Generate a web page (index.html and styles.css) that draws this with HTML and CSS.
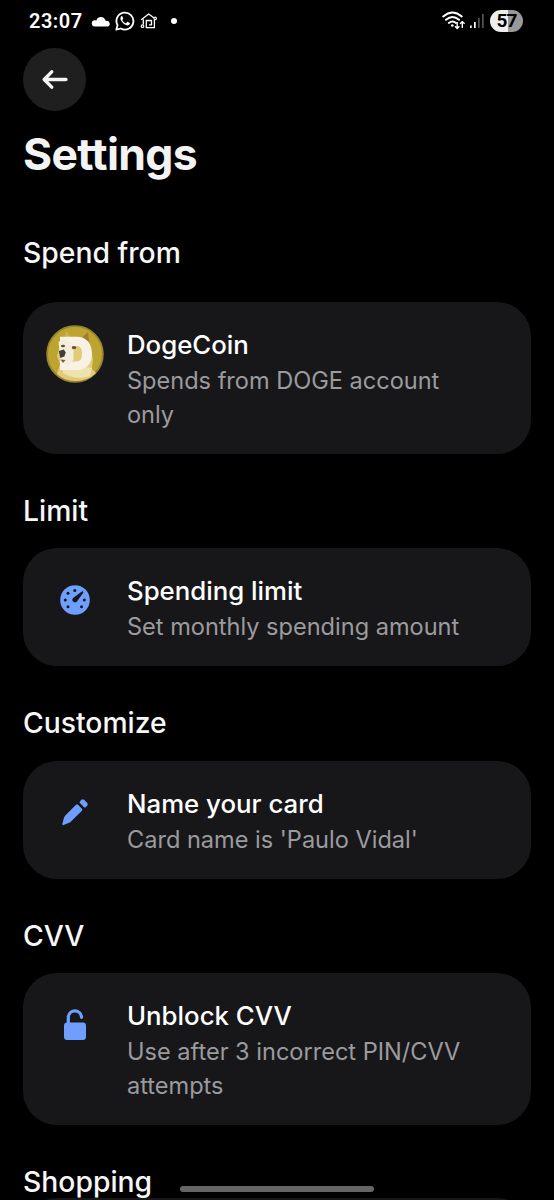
FILE: index.html
```html
<!DOCTYPE html>
<html lang="en">
<head>
<meta charset="utf-8">
<title>Settings</title>
<link rel="stylesheet" href="styles.css">
</head>
<body>
<div class="screen">
  <header class="status">
    <div class="status-left">
      <span class="clock">23:07</span>
      <svg class="cloud" width="20" height="12" viewBox="0 0 20 12"><path fill="#fff" d="M3.500 11.500a3.200 3.200 0 0 1-.2-6.300q1.200-.2 1.900.2A5 5 0 0 1 14 4.200q.7 1 .7 1.800A2.800 2.800 0 0 1 16.800 11.500z"/></svg>
      <svg class="whatsapp" width="20" height="20" viewBox="0 0 20 20"><path fill="none" stroke="#fff" stroke-width="1.800" stroke-linejoin="round" d="M1.300 18.700l1.200-4.500A8.500 8.500 0 1 1 5.800 17.500z"/><path fill="#fff" d="M7.300 5.200c-.4-.3-.8-.2-1.200.2-1.300 1.400-.7 3.400.6 5.200 1.500 2.100 3.700 3.800 5.800 3.900 1.100 0 2.300-.8 2.400-1.900.1-.4-.1-.6-.4-.8l-1.700-.9c-.3-.1-.5-.1-.7.2l-.8 1c-.2.200-.4.300-.7.100-1.400-.6-2.400-1.600-3.200-2.900-.1-.3-.1-.4.1-.6.400-.4.900-.9.700-1.400z"/></svg>
      <svg class="home" width="18" height="16" viewBox="0 0 18 16"><g fill="none" stroke="#fff" stroke-width="1.300" stroke-linejoin="round"><path d="M3.300 11.500V6.300M1.200 6.700L8.700 1l5.400 4M14.400 6.800v7.900H6.300V7.500h5.200v4.400H9"/></g><g fill="#000" stroke="#fff" stroke-width="1.200"><circle cx="2.500" cy="13.200" r="1.300"/><circle cx="15.200" cy="5.400" r="1.200"/></g></svg>
      <span class="dot"></span>
    </div>
    <div class="status-right">
      <svg class="wifi" width="24" height="20" viewBox="0 0 24 20"><g fill="none" stroke="#fff" stroke-width="1.900" stroke-linecap="round"><path d="M1.200 5.500Q10.500-2.500 19.800 5.500M4 8.800q6.500-5.600 13 0M6.800 12q3.700-3 7.200 0"/></g><circle cx="10.300" cy="14.500" r="1.300" fill="#fff"/><path fill="none" stroke="#fff" stroke-width="1.400" d="M15.200 11v6.500M13 15.300l2.200 2.300 2.200-2.300M20.300 17v-6.300M18 12.800l2.300-2.200 2.300 2.200"/></svg>
      <svg class="signal" width="14" height="16" viewBox="0 0 14 16"><path fill="#fff" d="M0 12.500h1.700V15H0zM4 9h1.700v6H4z"/><path fill="#555" d="M8 5h1.700v10H8zM12 1h1.700v14H12z"/></svg>
      <span class="battery">57</span>
    </div>
  </header>
  <main class="content">
    <button class="back" aria-label="Back"><svg width="26" height="20" viewBox="0 0 26 20"><path fill="none" stroke="#f4f4f4" stroke-width="3.300" stroke-linecap="round" stroke-linejoin="round" d="M24 9.500H2.500M9.700 1.800L2.200 9.500l7.500 7.700"/></svg></button>
    <h1 class="title">Settings</h1>

    <section class="group first">
      <h2 class="heading">Spend from</h2>
      <div class="card">
        <div class="icon"><svg width="58" height="58" viewBox="0 0 58 58"><circle cx="29" cy="29" r="27.900" fill="#bda32f" stroke="#96852f" stroke-width="1.800"/><path fill="#a17b32" d="M35 14l7-7 1.500 12z"/><path fill="#cdb45c" d="M19 13l1-7 6 8z"/><path fill="#e2ca78" d="M15 16q14-8 28 1l4 17-1 10 4 4q-8 8-20 8-12 0-19-7l3-10-3-8z"/><path fill="#eee2ad" d="M16 37l14 3 16 3-2 8q-14 5-27-3z"/><path fill="#f7f2e5" fill-rule="evenodd" d="M14 11.800h17c9.500 0 15 7 15 16.700S41 45 31 45H14V36h4V21h-4zM26 21v15.500h4.500c4 0 5.500-3 5.500-8s-1.500-7.500-5.500-7.500z"/><path fill="#f4eddb" d="M12.500 17q6-5 12 0l3 9v9l-6 6-7-6z"/><path fill="#403f35" d="M12.800 26l5-1.500 2 3-1.500 4-4 1.500z"/><path fill="#69644e" d="M14.500 34.500l5 .5-2.500 3z"/><ellipse cx="17" cy="21" rx="2" ry="1.300" fill="#5a4d2c"/><ellipse cx="28" cy="22.500" rx="2.300" ry="1.500" fill="#65532c"/></svg></div>
        <div class="text"><div class="name">DogeCoin</div><div class="desc">Spends from DOGE account only</div></div>
      </div>
    </section>

    <section class="group">
      <h2 class="heading">Limit</h2>
      <div class="card">
        <div class="icon"><svg width="58" height="58" viewBox="0 0 58 58"><circle cx="29" cy="29" r="14.800" fill="#6e9fff"/><g fill="#17171a"><circle cx="28.800" cy="19.500" r="1.500"/><circle cx="22" cy="22.200" r="1.500"/><circle cx="19.300" cy="29" r="1.500"/><circle cx="22" cy="35.700" r="1.500"/><circle cx="35.500" cy="35.700" r="1.500"/><circle cx="38.300" cy="29" r="1.500"/><path d="M35.900 20.500a.9.900 0 0 1 1.300 1.300L31 30.500a2.600 2.600 0 1 1-3.900-3.500z"/></g></svg></div>
        <div class="text"><div class="name">Spending limit</div><div class="desc">Set monthly spending amount</div></div>
      </div>
    </section>

    <section class="group">
      <h2 class="heading">Customize</h2>
      <div class="card">
        <div class="icon"><svg width="58" height="58" viewBox="0 0 58 58"><path fill="#6e9fff" d="M16.300 40l1.600-6q.4-1.500 1.400-2.500L30 20.800q1-.9 2 0l3.900 3.900q.9 1 0 2L25 37.400q-1 1-2.500 1.600l-4.900 2.100q-1.400.3-1.300-1.100zM33.900 17.400l1.600-1.600q1.300-1.100 2.600 0l3.200 3.200q1.100 1.300 0 2.600l-1.600 1.600q-.8.800-1.600 0l-4.200-4.200q-.8-.8 0-1.600z"/></svg></div>
        <div class="text"><div class="name">Name your card</div><div class="desc">Card name is 'Paulo Vidal'</div></div>
      </div>
    </section>

    <section class="group">
      <h2 class="heading">CVV</h2>
      <div class="card">
        <div class="icon"><svg width="58" height="58" viewBox="0 0 58 58"><rect x="18" y="26.500" width="22" height="17.500" rx="3.200" fill="#6e9fff"/><path fill="none" stroke="#6e9fff" stroke-width="3.200" stroke-linecap="round" d="M22.300 28v-7.500a6.700 6.700 0 0 1 13.200 0v.8"/></svg></div>
        <div class="text"><div class="name">Unblock CVV</div><div class="desc">Use after 3 incorrect PIN/CVV attempts</div></div>
      </div>
    </section>

    <section class="group last"><h2 class="heading">Shopping</h2><div class="card"></div></section>
  </main>
  <div class="gesture"></div>
</div>
</body>
</html>
```

FILE: styles.css
```css
* { box-sizing: border-box; }
body { margin: 0; background: #000; }
.screen { position: relative; width: 554px; height: 1200px; overflow: hidden; background: #000; color: #f7f7f7; font-family: Inter, "Liberation Sans", sans-serif; }
.status { height: 42px; padding: 0 31px 0 29px; display: flex; justify-content: space-between; align-items: center; }
.status-left, .status-right { display: flex; align-items: center; }
.clock { width: 62px; font: 600 20px/24px Roboto, sans-serif; letter-spacing: .5px; color: #fff; }
.whatsapp { margin-left: 4px; }
.home { margin-left: 5px; }
.dot { width: 6px; height: 6px; margin-left: 13px; border-radius: 50%; background: #fff; }
.signal { margin: 0 6px 0 4px; }
.battery { width: 33px; height: 22px; border-radius: 11px; background: linear-gradient(90deg, #eee 56%, #999 56%); color: #000; font: 700 19px/22px Roboto, sans-serif; letter-spacing: -.8px; text-align: center; }
.content { padding: 6px 23px 0; }
.back { display: flex; align-items: center; justify-content: center; width: 63px; height: 63px; padding: 0; border: 0; border-radius: 50%; background: #1f1f20; }
.title { margin: 14px 0 1px; font-size: 44.500px; font-weight: 700; line-height: 58px; letter-spacing: -.7px; color: #f3f3f3; }
.group { padding-top: 39px; }
.group.first { padding-top: 51px; }
.heading { margin: 0 0 19.300px; font-size: 28.300px; font-weight: 500; line-height: 36px; }
.first .heading { margin-bottom: 31px; }
.card { display: flex; gap: 23px; padding: 23px 60px 22px 23px; border-radius: 34px; background: #17171a; }
.last .heading { margin-bottom: -1.500px; }
.last .card { height: 118px; }
.icon { width: 58px; height: 58px; }
.icon svg, .back svg { display: block; }
.text { flex: 1; padding-top: 2px; }
.name { margin-bottom: 2px; font-size: 25.800px; font-weight: 500; line-height: 35px; color: #fff; }
.desc { font-size: 23.550px; line-height: 34px; color: #9b9b9e; }
.gesture { position: absolute; left: 180px; top: 1186px; width: 194px; height: 6px; border-radius: 3px; background: #666; }
```
